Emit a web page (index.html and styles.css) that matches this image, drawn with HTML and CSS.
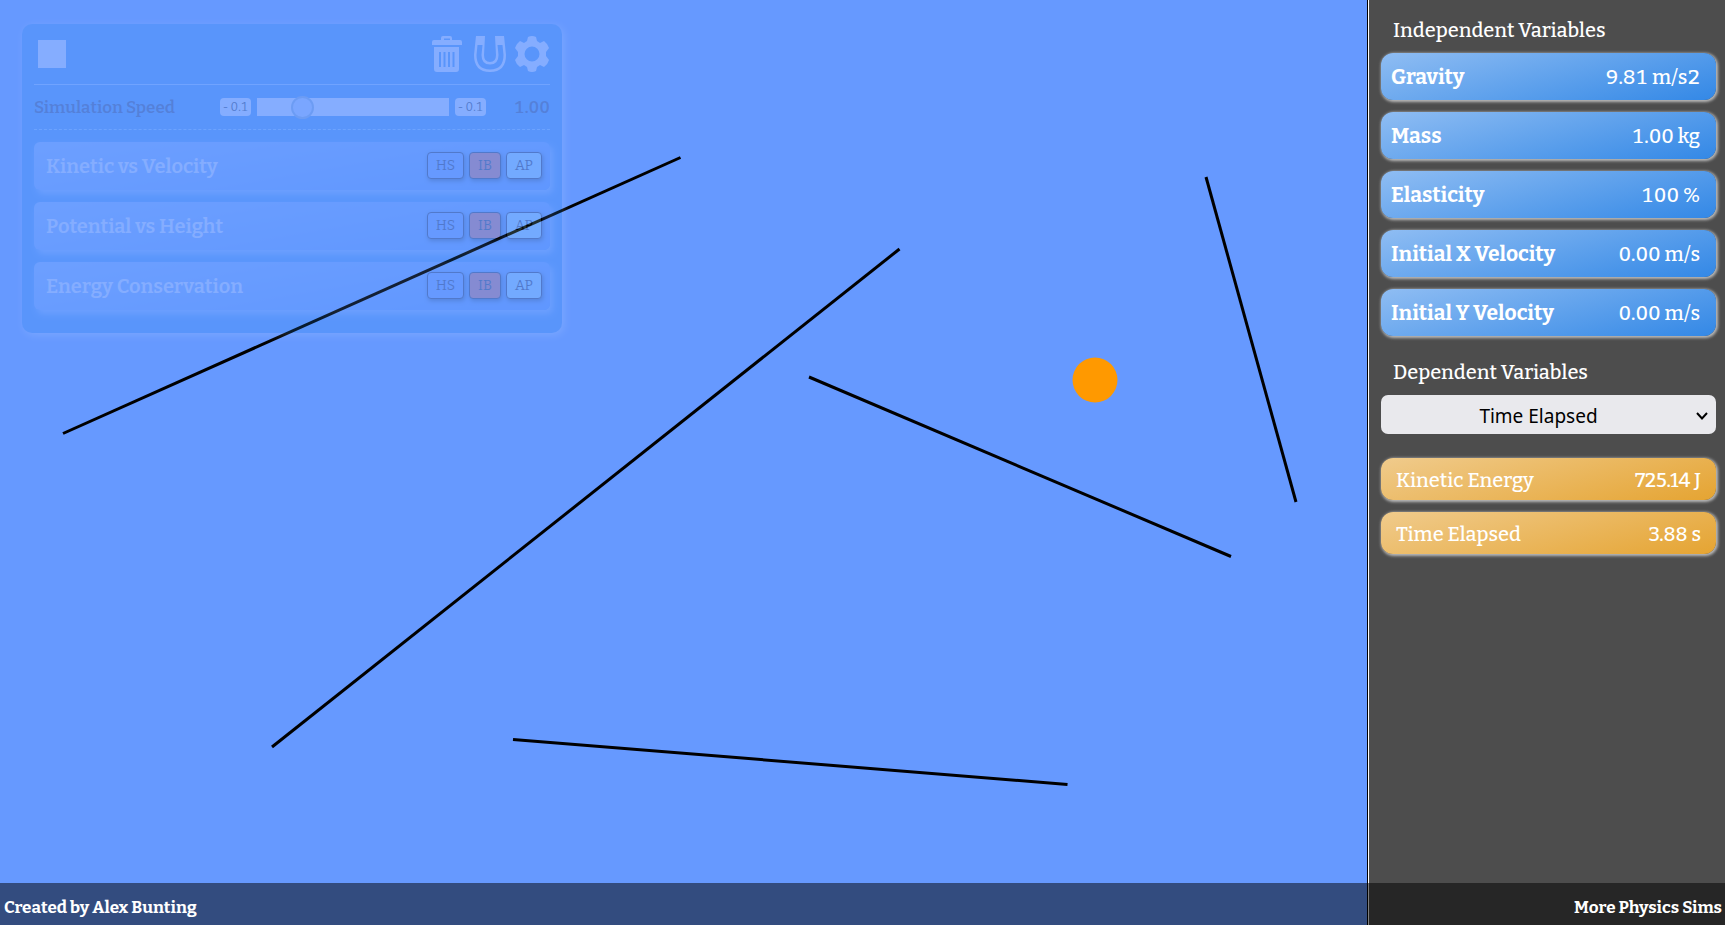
FILE: index.html
```html
<!DOCTYPE html>
<html lang="en">
<head>
<meta charset="utf-8">
<title>Energy Simulation</title>
<link rel="stylesheet" href="styles.css">
</head>
<body>
<div class="app">
  <main class="stage">
    <svg class="scene" viewBox="0 0 1368 925" preserveAspectRatio="xMinYMin slice" role="img" aria-label="Ball and platforms">
      <g stroke="#000" stroke-width="3">
        <line x1="63" y1="433.500" x2="680.500" y2="157.500"/>
        <line x1="272" y1="747" x2="899.500" y2="249"/>
        <line x1="809" y1="377" x2="1231" y2="556.500"/>
        <line x1="1206" y1="177" x2="1296" y2="502"/>
        <line x1="513" y1="739.500" x2="1067.500" y2="784.500"/>
      </g>
      <circle cx="1095" cy="380" r="22.5" fill="#f90"/>
    </svg>
    <section class="panel">
      <div class="toolbar">
        <button class="tool stop" aria-label="Stop"><svg width="28" height="28" viewBox="0 0 28 28"><rect width="28" height="28" fill="#fff"/></svg></button>
        <div class="tools">
          <button class="tool" aria-label="Delete"><svg width="30" height="36" viewBox="0 0 30 36"><path fill="#fff" fill-rule="evenodd" d="M9 4V2Q9 0 11 0H18Q20 0 20 2V4H28Q30 4 30 6V9H0V6Q0 4 2 4ZM12 4H18V2.500H12ZM2 11H27V33Q27 36 24 36H5Q2 36 2 33ZM7 16V31H9V16ZM11.500 16V31H13.500V16ZM16 16V31H18V16ZM20.500 16V31H22.500V16Z"/></svg></button>
          <button class="tool" aria-label="Snap"><svg width="32" height="36" viewBox="0 0 32 36"><path fill="#fff" fill-rule="evenodd" d="M2 0H11L10 19Q10 26 16 26Q22 26 22 19L21 0H30L32 19Q32 36 16 36Q0 36 0 19ZM3.500 9L2.500 19Q2.500 33.500 16 33.500Q29.500 33.500 29.500 19L28.500 9H23.500L24.500 19Q24.500 28.500 16 28.500Q7.500 28.500 7.500 19L8.500 9Z"/></svg></button>
          <button class="tool" aria-label="Settings"><svg width="34" height="36" viewBox="0 0 34 36"><path fill="#fff" fill-rule="evenodd" d="M13 1Q17-1 21 1L22 5L25 7L29 5Q33 8 34 12L31 16V20L34 24Q33 28 29 31L25 29L22 31L21 35Q17 37 13 35L12 31L9 29L5 31Q1 28 0 24L3 20V16L0 12Q1 8 5 5L9 7L12 5ZM17 10.500A7.500 7.500 0 1 0 17 25.500A7.500 7.500 0 1 0 17 10.500Z"/></svg></button>
        </div>
      </div>
      <div class="speed">
        <label for="speed">Simulation Speed</label>
        <button class="step">- 0.1</button>
        <input id="speed" class="slider" type="range" min="0" max="5" step="0.1" value="1">
        <button class="step">- 0.1</button>
        <output class="amount" for="speed">1.00</output>
      </div>
      <div class="lessons">
        <div class="lesson"><span class="name">Kinetic vs Velocity</span><button class="tag hs">HS</button><button class="tag ib">IB</button><button class="tag ap">AP</button></div>
        <div class="lesson"><span class="name">Potential vs Height</span><button class="tag hs">HS</button><button class="tag ib">IB</button><button class="tag ap">AP</button></div>
        <div class="lesson"><span class="name">Energy Conservation</span><button class="tag hs">HS</button><button class="tag ib">IB</button><button class="tag ap">AP</button></div>
      </div>
    </section>
  </main>
  <aside class="sidebar">
    <h2 class="heading">Independent Variables</h2>
    <div class="inputs">
      <div class="card"><b>Gravity</b><span>9.81 m/s2</span></div>
      <div class="card"><b>Mass</b><span>1.00 kg</span></div>
      <div class="card"><b>Elasticity</b><span>100 %</span></div>
      <div class="card"><b>Initial X Velocity</b><span>0.00 m/s</span></div>
      <div class="card"><b>Initial Y Velocity</b><span>0.00 m/s</span></div>
    </div>
    <h2 class="heading second"><label for="dependent">Dependent Variables</label></h2>
    <div class="picker">
      <select id="dependent"><option>Time Elapsed</option><option>Kinetic Energy</option></select>
      <svg class="chevron" width="12" height="8" viewBox="0 0 12 8"><path d="M1 1L6 6.500L11 1" fill="none" stroke="#000" stroke-width="2"/></svg>
    </div>
    <div class="outputs">
      <div class="card gold"><span>Kinetic Energy</span><span>725.14 J</span></div>
      <div class="card gold"><span>Time Elapsed</span><span>3.88 s</span></div>
    </div>
  </aside>
  <footer class="footer"><a href="#">Created by Alex Bunting</a><a href="#">More Physics Sims</a></footer>
</div>
</body>
</html>
```
FILE: styles.css
```css
* { box-sizing: border-box; }
body { margin: 0; font-family: "Bitter", "DejaVu Serif Condensed", "DejaVu Serif", serif; font-weight: 500; font-variant-numeric: tabular-nums; color: #fff; }
button { font-family: inherit; font-variant-numeric: inherit; margin: 0; padding: 0; border: 0; background: none; }
.app { position: relative; display: flex; min-height: 100vh; }
.stage { position: relative; flex: 1; background: #69f; overflow: hidden; }
.scene { display: block; width: 100%; height: 100%; position: absolute; }
.panel { position: absolute; left: 22px; top: 24px; width: 540px; padding: 12px 12px 23px; border-radius: 10px; background: #2a8af0; box-shadow: 2px 2px 8px #cdf; opacity: .2; }
.toolbar { display: flex; align-items: center; justify-content: space-between; height: 49px; padding: 0 1px 13px 4px; border-bottom: 1px solid #9cf; }
.tool, .tool svg { display: block; }
.tools { display: flex; gap: 12px; }
.tools .tool:last-child { margin-left: -3px; }
.speed { display: flex; align-items: center; height: 45px; gap: 6px; border-bottom: 1px dashed #8cf; color: #124; font-size: 17px; font-weight: 600; }
.speed label { flex: 1; white-space: nowrap; }
.step { width: 31px; height: 18px; border-radius: 4px; background: #fff; color: #000; font-size: 12px; }
.slider { appearance: none; width: 192px; height: 18px; margin: 0; background: #fff; }
.slider::-webkit-slider-thumb { appearance: none; width: 23px; height: 23px; border: 2px solid #8ac; border-radius: 50%; background: #cdf; }
.amount { width: 58px; text-align: right; }
.lessons { display: flex; flex-direction: column; gap: 12px; padding-top: 12px; }
.lesson { display: flex; align-items: center; gap: 5px; height: 48px; padding: 0 8px 2px 12px; border-radius: 6px; background: linear-gradient(170deg, #8abaff, #4a90ff); box-shadow: 3px 4px 6px #8bf; }
.name { flex: 1; padding-top: 2px; font-size: 20px; font-weight: 600; color: #fff; }
.tag { height: 27px; border: 1px solid #000; border-radius: 4px; color: #000; font-size: 14px; box-shadow: 1px 2px 4px #135; }
.hs { width: 37px; background: #6699ff; }
.ib { width: 32px; background: #ff5522; }
.ap { width: 36px; background: #aaeeff; }
.sidebar { width: 357px; padding: 18px 9px 52px 12px; border-left: 1px solid #fff; outline: 1px solid #000; background: #4d4d4d; z-index: 1; }
.heading { margin: 0 0 11px 12px; font-size: 20px; line-height: 24px; font-weight: 500; }
.inputs, .outputs { display: flex; flex-direction: column; gap: 12px; }
.card { display: flex; align-items: center; justify-content: space-between; height: 47px; padding: 1px 16px 0 10px; border-radius: 12px; background: linear-gradient(165deg, #8fbdf3, #3388e6); box-shadow: 1px 1px 3px 1px #bbb; font-size: 20px; }
.card b { font-size: 21px; font-weight: 700; }
.gold { height: 42px; padding: 1px 15px 0; background: linear-gradient(165deg, #f0cb8c, #e5a432); font-variant-numeric: normal; }
.second { margin-top: 24px; }
.picker { position: relative; margin-bottom: 24px; }
.picker select { appearance: none; display: block; width: 100%; height: 39px; padding: 2px 20px 0 0; border: 0; border-radius: 7px; background: #e9e9ed; color: #000; font: 19px "Noto Sans", sans-serif; text-align: center; text-align-last: center; }
.chevron { position: absolute; right: 8px; top: 17px; pointer-events: none; }
.footer { position: absolute; left: 0; right: 0; bottom: 0; z-index: 2; display: flex; align-items: center; justify-content: space-between; height: 42px; padding: 6px 3px 0 4px; background: rgba(0, 0, 0, .5); }
.footer a { color: #fff; text-decoration: none; font-size: 17px; font-weight: 700; }
```
